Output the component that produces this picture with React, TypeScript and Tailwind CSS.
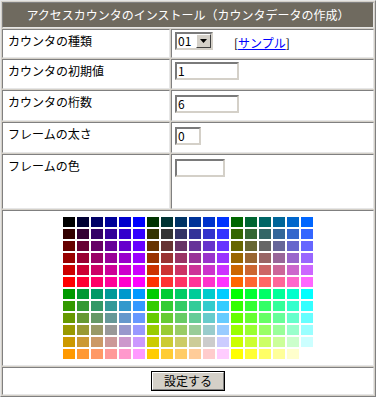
import React from "react";

const steps = ["00", "33", "66", "99", "cc", "ff"];

function Palette() {
  const cells: string[] = [];
  for (let r = 0; r < 12; r++) {
    for (let c = 0; c < 18; c++) {
      const R = steps[r % 6];
      const G = steps[Math.floor(c / 6) + (r >= 6 ? 3 : 0)];
      const B = steps[c % 6];
      cells.push("#" + R + G + B);
    }
  }
  return (
    <div className="grid grid-cols-[repeat(18,12px)] auto-rows-[10px] gap-[2px]">
      {cells.map((col, i) => (
        <div key={i} style={{ backgroundColor: col }} />
      ))}
    </div>
  );
}

const cellCls =
  "bg-white border border-t-[#808080] border-l-[#808080] border-b-[#e6e6e6] border-r-[#e6e6e6]";

function TextBox({ w, value }: { w: string; value: string }) {
  return (
    <div
      className={`${w} h-[18px] bg-white border-2 border-t-[#7a7a7a] border-l-[#7a7a7a] border-b-[#d4d0c8] border-r-[#d4d0c8] flex items-center pl-[1px] text-[12px] leading-none text-black`}
    >
      {value}
    </div>
  );
}

function Row({
  label,
  h,
  children,
  pt,
}: {
  label: string;
  h: string;
  children: React.ReactNode;
  pt: string;
}) {
  return (
    <div className={`flex gap-[1px] ${h}`}>
      <div className={`${cellCls} w-[168px] pl-[5px] pt-[4px] text-[12px] leading-[14px] text-black`}>
        {label}
      </div>
      <div className={`${cellCls} w-[203px] pl-[3px] ${pt}`}>{children}</div>
    </div>
  );
}

export default function App() {
  return (
    <div
      className="w-[376px] h-[397px] bg-[#d4d0c8] border border-t-[#e6e6e6] border-l-[#e6e6e6] border-b-[#808080] border-r-[#808080] p-[1px] flex flex-col gap-[1px]"
      style={{ fontFamily: '"Noto Sans CJK JP", "MS PGothic", sans-serif' }}
    >
      <div className="h-[26px] bg-[#6f6a5f] border border-t-[#808080] border-l-[#808080] border-b-[#e6e6e6] border-r-[#e6e6e6] flex items-center justify-center text-white text-[12px] leading-none">
        アクセスカウンタのインストール（カウンタデータの作成）
      </div>
      <Row label="カウンタの種類" h="h-[29px]" pt="pt-[2px]">
        <div className="flex items-center">
          <div className="w-[38px] h-[18px] bg-white border-2 border-t-[#7a7a7a] border-l-[#7a7a7a] border-b-[#d4d0c8] border-r-[#d4d0c8] flex items-stretch">
            <div className="flex-1 text-[12px] leading-none flex items-center pl-[1px] text-black">01</div>
            <div className="w-[15px] bg-[#d4d0c8] border border-t-white border-l-white border-b-[#404040] border-r-[#404040] flex items-center justify-center">
              <svg width="7" height="4" viewBox="0 0 7 4">
                <polygon points="0,0 7,0 3.5,4" fill="#000" />
              </svg>
            </div>
          </div>
          <div className="ml-[21px] mt-[3px] text-[12px] leading-none text-black">
            [<span className="text-[#0000ff] underline">サンプル</span>]
          </div>
        </div>
      </Row>
      <Row label="カウンタの初期値" h="h-[30px]" pt="pt-[2px]">
        <TextBox w="w-[64px]" value="1" />
      </Row>
      <Row label="カウンタの桁数" h="h-[31px]" pt="pt-[4px]">
        <TextBox w="w-[64px]" value="6" />
      </Row>
      <Row label="フレームの太さ" h="h-[31px]" pt="pt-[4px]">
        <TextBox w="w-[26px]" value="0" />
      </Row>
      <Row label="フレームの色" h="h-[55px]" pt="pt-[4px]">
        <TextBox w="w-[50px]" value="" />
      </Row>
      <div className={`${cellCls} h-[156px] flex items-center justify-center`}>
        <Palette />
      </div>
      <div className={`${cellCls} h-[28px] flex items-center justify-center`}>
        <div className="w-[74px] h-[20px] border border-black bg-[#d4d0c8]">
          <div className="w-full h-full border border-t-white border-l-white border-b-[#808080] border-r-[#808080] flex items-center justify-center text-[12px] leading-none text-black">
            設定する
          </div>
        </div>
      </div>
    </div>
  );
}
